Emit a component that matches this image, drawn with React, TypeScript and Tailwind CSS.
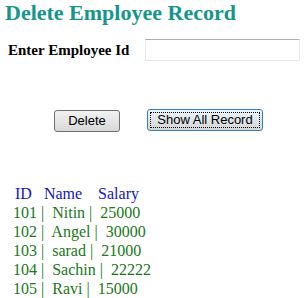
export default function App() {
  const rows = [
    ['101', 'Nitin', '25000'],
    ['102', 'Angel', '30000'],
    ['103', 'sarad', '21000'],
    ['104', 'Sachin', '22222'],
    ['105', 'Ravi', '15000'],
  ];

  return (
    <div className="w-[304px] h-[298px] bg-white overflow-hidden font-['Liberation_Serif',serif]">
      {/* Title */}
      <h1 className="pt-px pl-[5px] text-[22px] leading-[24px] font-bold text-[#16968b]">Delete Employee Record</h1>

      {/* Input row */}
      <div className="flex items-center mt-[14px] pl-[8px]">
        <label className="w-[137px] text-[15px] font-bold text-black">Enter Employee Id</label>
        <input
          type="text"
          className="w-[155px] h-[22px] bg-white border border-[#e3e9ef] border-t-[#abadb3] outline-none"
        />
      </div>

      {/* Buttons */}
      <div className="flex items-start mt-[47px] pl-[54px] gap-[27px] font-['Liberation_Sans',sans-serif] text-[13px] text-black">
        <button className="mt-px w-[66px] h-[22px] rounded-[3px] border border-[#707070] bg-gradient-to-b from-[#f2f2f2] to-[#d8d8d8] leading-none">
          Delete
        </button>
        <button className="w-[116px] h-[22px] rounded-[3px] border border-[#3c7fb1] bg-gradient-to-b from-[#eaf6fd] to-[#d5d5d5] p-[2px] leading-none">
          <span className="flex items-center justify-center w-full h-full border border-dotted border-black">Show All Record</span>
        </button>
      </div>

      {/* Records */}
      <div className="mt-[52px] text-[16px] leading-[19px] whitespace-pre">
        <div className="pl-[15px] text-[#1414c4]">{'ID   Name    Salary'}</div>
        {rows.map(([id, name, salary]) => (
          <div key={id} className="pl-[13px] text-[#1a781a]">
            {`${id} |  ${name} |  ${salary}`}
          </div>
        ))}
      </div>
    </div>
  );
}
